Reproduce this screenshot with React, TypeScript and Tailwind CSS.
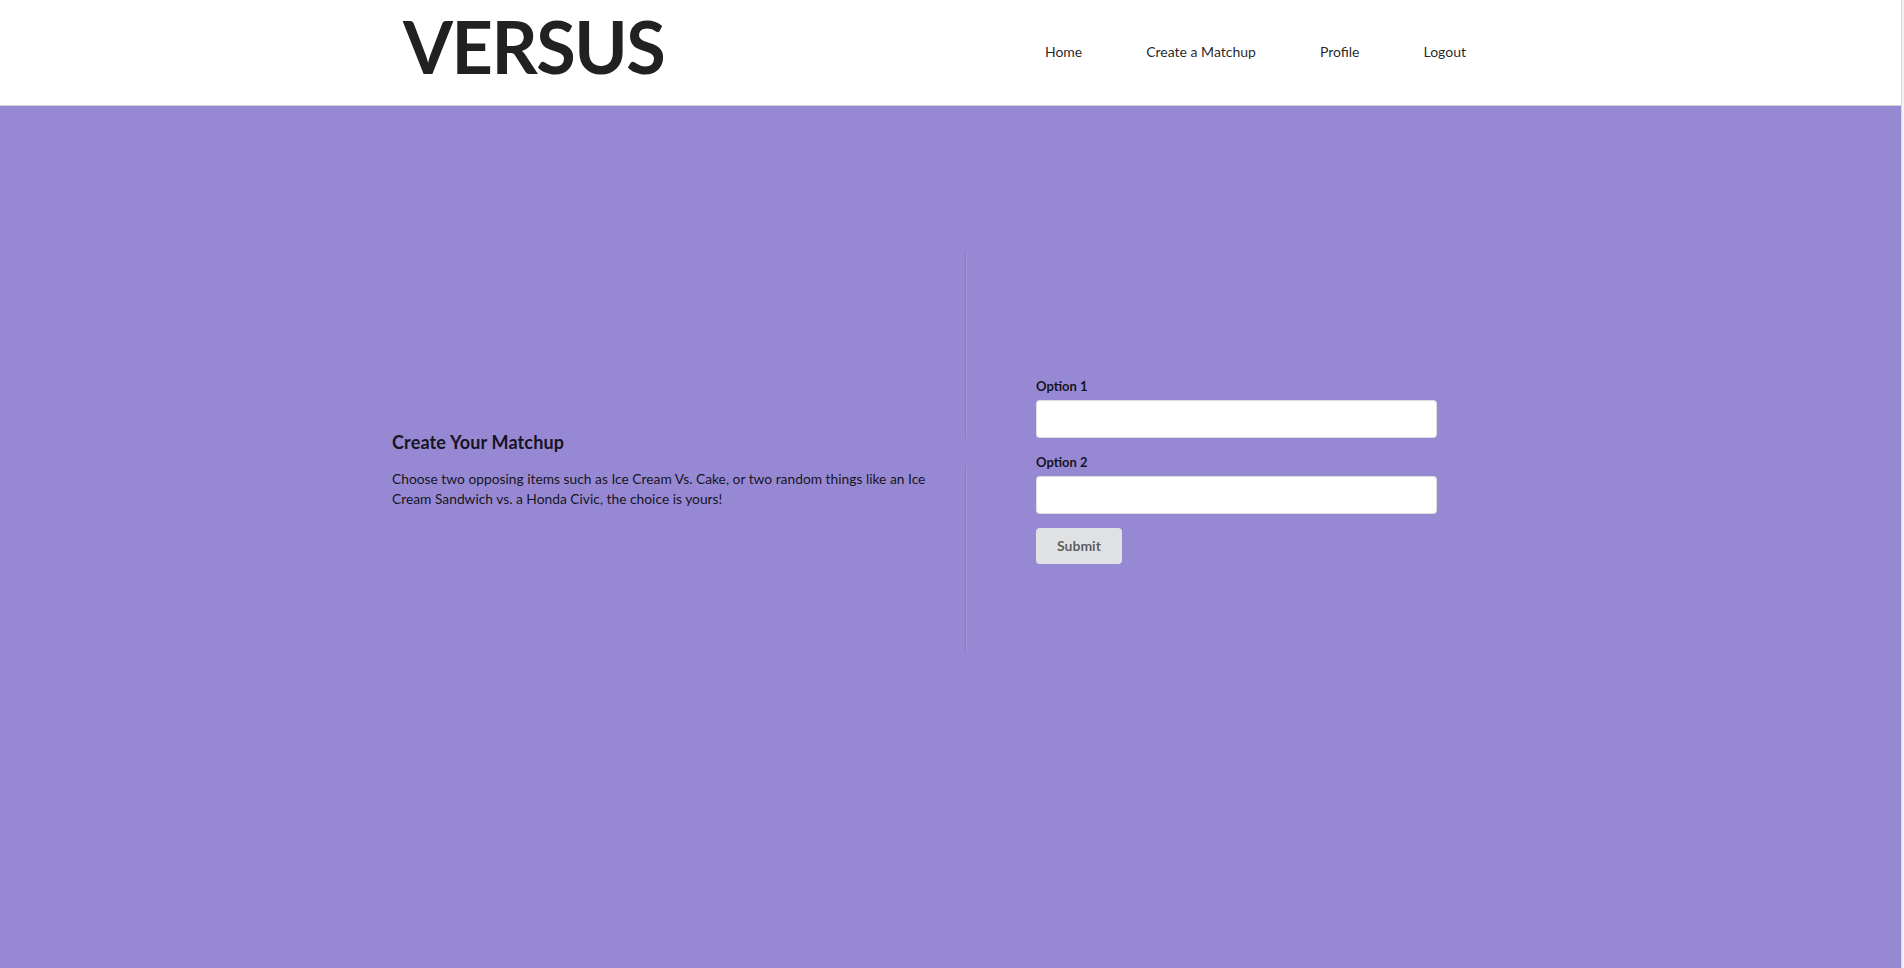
const navItems = ["Home", "Create a Matchup", "Profile", "Logout"];

function Field({ label }: { label: string }) {
  return (
    <div className="mb-[14px]">
      <label className="block text-[13px] leading-[18px] font-bold text-[rgba(0,0,0,0.87)] mb-[5px]">{label}</label>
      <input
        type="text"
        className="block w-[401px] h-[38px] bg-white border border-[rgba(34,36,38,0.15)] rounded-[4px] px-[14px] text-sm outline-none"
      />
    </div>
  );
}

export default function App() {
  return (
    <div className="flex min-h-screen font-['Lato',sans-serif]">
      <div className="flex-1 flex flex-col">
        <header className="h-[106px] bg-white border-b border-[#d4d4d5] shrink-0">
          <div className="w-[1127px] mx-auto h-full flex justify-between">
            <h1 className="ml-[16px] mt-[10px] text-[72px] leading-none font-bold text-[#212121] tracking-[-1.5px]">VERSUS</h1>
            <nav className="flex items-center pr-[16px] pb-[2px]">
              {navItems.map((item) => (
                <a key={item} className="px-[32px] text-sm text-[rgba(0,0,0,0.87)] cursor-pointer">
                  {item}
                </a>
              ))}
            </nav>
          </div>
        </header>

        <main className="flex-1 bg-[#9688d2]">
          <div className="w-[1127px] mx-auto pt-[146px] flex h-[546px]">
            <div className="w-[578px] pl-[5px] pr-[23px] pt-[179px]">
              <h3 className="text-[18px] leading-[23px] font-bold text-[rgba(0,0,0,0.87)] tracking-[0.15px]">Create Your Matchup</h3>
              <p className="mt-[15px] text-[13.8px] leading-[20px] text-[rgba(0,0,0,0.87)]">
                Choose two opposing items such as Ice Cream Vs. Cake, or two random things like an Ice Cream Sandwich vs. a Honda Civic, the choice is yours!
              </p>
            </div>

            <div className="flex flex-col w-[2px]">
              <div className="h-[186px] flex">
                <div className="w-px bg-[#8a7cc4]" />
                <div className="w-px bg-[#a396d8]" />
              </div>
              <div className="h-[28px]" />
              <div className="h-[186px] flex">
                <div className="w-px bg-[#8a7cc4]" />
                <div className="w-px bg-[#a396d8]" />
              </div>
            </div>

            <div className="pl-[69px] pt-[125px]">
              <form onSubmit={(e) => e.preventDefault()}>
                <Field label="Option 1" />
                <div className="pt-px">
                  <Field label="Option 2" />
                </div>
                <button
                  type="submit"
                  className="h-[36px] px-[21px] rounded-[4px] bg-[#e0e1e2] text-sm font-bold text-[rgba(0,0,0,0.6)]"
                >
                  Submit
                </button>
              </form>
            </div>
          </div>
        </main>
      </div>
      <div className="w-[3px] flex shrink-0">
        <div className="w-px bg-[#dcdcdc]" />
        <div className="flex-1 bg-[#f1f1f1]" />
      </div>
    </div>
  );
}
